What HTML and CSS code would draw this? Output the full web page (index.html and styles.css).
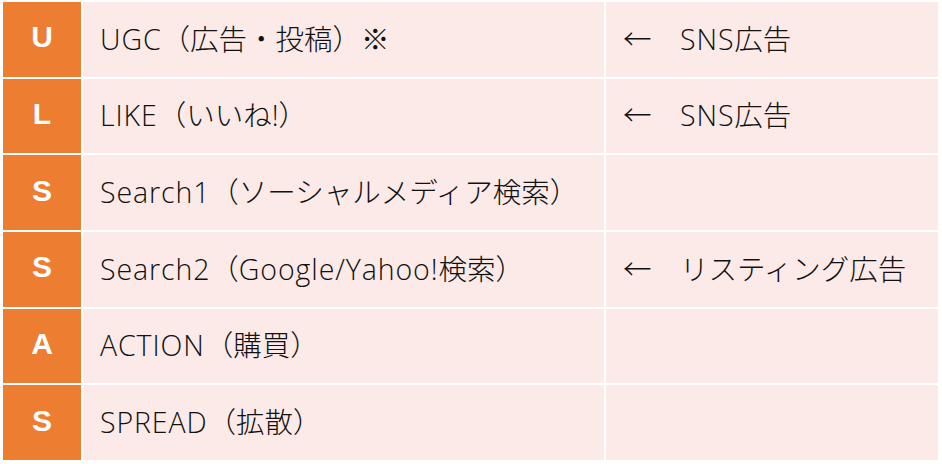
FILE: index.html
```html
<!DOCTYPE html>
<html>
<head>
    <meta charset="utf-8">
    <title>ULSSAS</title>
    <link rel="stylesheet" href="styles.css">
</head>
<body>
    <table class="model">
        <tr>
            <td class="key">U</td>
            <td class="step"><span class="en">UGC</span>（広告・投稿）※</td>
            <td class="note">←　<span class="en">SNS</span>広告</td>
        </tr>
        <tr>
            <td class="key">L</td>
            <td class="step"><span class="en">LIKE</span>（いいね!）</td>
            <td class="note">←　<span class="en">SNS</span>広告</td>
        </tr>
        <tr>
            <td class="key">S</td>
            <td class="step"><span class="en">Search1</span>（ソーシャルメディア検索）</td>
            <td class="note"></td>
        </tr>
        <tr>
            <td class="key">S</td>
            <td class="step"><span class="en">Search2</span>（<span class="en">Google/Yahoo!</span>検索）</td>
            <td class="note">←　リスティング広告</td>
        </tr>
        <tr>
            <td class="key">A</td>
            <td class="step"><span class="en">ACTION</span>（購買）</td>
            <td class="note"></td>
        </tr>
        <tr>
            <td class="key">S</td>
            <td class="step"><span class="en">SPREAD</span>（拡散）</td>
            <td class="note"></td>
        </tr>
    </table>
</body>
</html>
```

FILE: styles.css
```css
body {
    margin: 0;
    background: #ffffff;
    font-family: "Open Sans", "Noto Sans CJK JP", sans-serif;
}
.model {
    border-collapse: separate;
    border-spacing: 2px;
    margin: 0 0 0 1px;
    width: 939px;
    table-layout: fixed;
}
.model td {
    box-sizing: border-box;
    height: 74.67px;
    padding: 0 0 4px 0;
    vertical-align: middle;
}
.key {
    width: 78px;
    background: #ed7d31;
    color: #ffffff;
    text-align: center;
    font-family: "Liberation Sans", Arial, sans-serif;
    font-weight: bold;
    font-size: 30px;
}
.step,
.note {
    background: #fbeae7;
    color: #111111;
    font-size: 28.5px;
    font-weight: 300;
    white-space: nowrap;
}
.model .step,
.model .note {
    padding-left: 17px;
}
.step {
    width: 521px;
}
.en {
    letter-spacing: 0.9px;
}
```
